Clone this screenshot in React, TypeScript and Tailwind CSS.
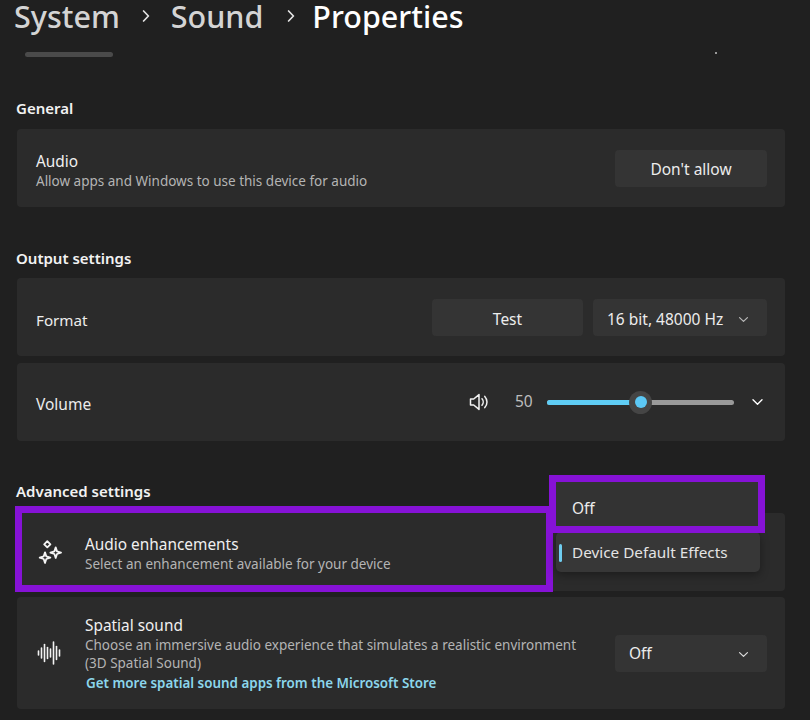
import type { ReactNode } from "react"

const purple = "border-[#8612d6]"

function Chevron({ className }: { className?: string }) {
  return (
    <svg viewBox="0 0 12 8" className={className} fill="none" stroke="currentColor" strokeWidth="1.4" strokeLinecap="round" strokeLinejoin="round">
      <path d="M1.5 1.8 6 6.2l4.5-4.4" />
    </svg>
  )
}

function BreadcrumbChevron({ className }: { className?: string }) {
  return (
    <svg viewBox="0 0 8 12" className={`h-[12px] w-[8px] text-[#e4e4e4] ${className}`} fill="none" stroke="currentColor" strokeWidth="1.7" strokeLinecap="round" strokeLinejoin="round">
      <path d="M1.6 1 6.4 6l-4.8 5" />
    </svg>
  )
}

function SparkleIcon() {
  return (
    <svg viewBox="0 0 24 24" className="h-[24px] w-[24px] text-[#f5f5f5]" fill="none" stroke="currentColor" strokeWidth="1.8" strokeLinejoin="round">
      <path d="M9.3 1.2 12.4 4.3 9.3 7.4 6.2 4.3z" />
      <path d="M17.7 7.4 19 11.4l4 1.3-4 1.3-1.3 4-1.3-4-4-1.3 4-1.3z" />
      <path d="M7 12.4 8.3 16.4l4 1.3-4 1.3L7 23l-1.3-4-4-1.3 4-1.3z" />
    </svg>
  )
}

function WaveIcon() {
  const bars = [
    [1.5, 10, 14],
    [4.5, 7, 17],
    [7.5, 3.5, 20.5],
    [10.5, 6.5, 17.5],
    [13.5, 8, 16],
    [16.5, 1, 23],
    [19.5, 5.5, 18.5],
    [22.5, 9, 15],
  ]
  return (
    <svg viewBox="0 0 25 24" className="h-[24px] w-[25px] text-[#f2f2f2]" stroke="currentColor" strokeWidth="1.6" strokeLinecap="round">
      {bars.map(([x, a, b]) => (
        <line key={x} x1={x} x2={x} y1={a} y2={b} />
      ))}
    </svg>
  )
}

function SpeakerIcon() {
  return (
    <svg viewBox="0 0 20 20" className="h-[20px] w-[20px] text-[#f2f2f2]" fill="none" stroke="currentColor" strokeWidth="1.5" strokeLinecap="round" strokeLinejoin="round">
      <path d="M1.5 7h3.2L10 2.6v14.8L4.7 13H1.5z" />
      <path d="M13 6.8c1.6 1.8 1.6 4.6 0 6.4" />
      <path d="M15.8 4.4c2.9 3.2 2.9 8 0 11.2" />
    </svg>
  )
}

function Card({ children, className = "" }: { children: ReactNode; className?: string }) {
  return <div className={`flex items-center rounded-[4px] bg-[#2b2b2b] pr-[18px] ${className}`}>{children}</div>
}

function Button({ children, className = "" }: { children: ReactNode; className?: string }) {
  return (
    <div className={`flex h-[37px] items-center rounded-[4px] bg-[#343434] text-[15.5px] text-[#ececec] ${className}`}>
      {children}
    </div>
  )
}

function Heading({ children, className = "" }: { children: ReactNode; className?: string }) {
  return <div className={`text-[15px] leading-[20px] font-semibold text-[#f2f2f2] ${className}`}>{children}</div>
}

function Title({ children }: { children: ReactNode }) {
  return <span className="text-[15.4px] leading-[20px] text-[#f0f0f0]">{children}</span>
}

function Sub({ children }: { children: ReactNode }) {
  return <span className="text-[13.5px] leading-[18px] text-[#b4b4b4]">{children}</span>
}

export default function App() {
  return (
    <div className="relative h-[720px] w-[810px] overflow-hidden bg-[#202020] font-['Noto_Sans','Open_Sans',sans-serif]">
      <div className="flex h-[32px] items-center pl-[14px] text-[30.5px] leading-[32px] font-medium text-[#d4d4d4]">
        <span>System</span>
        <BreadcrumbChevron className="mr-[21px] ml-[22px]" />
        <span>Sound</span>
        <BreadcrumbChevron className="mr-[17px] ml-[24px]" />
        <span className="text-white">Properties</span>
      </div>
      <div className="mt-[20px] ml-[25px] h-[5px] w-[88px] rounded-full bg-[#4a4a4a]" />

      <div className="flex flex-col px-[17px] pr-[25px]">
        <Heading className="mt-[41px] -ml-[1px]">General</Heading>
        <Card className="mt-[11px] h-[78px] justify-between pl-[19px]">
          <div className="flex flex-col pt-[6px]">
            <Title>Audio</Title>
            <div className="flex">
              <Sub>Allow apps and Windows to use this device for audio</Sub>
            </div>
          </div>
          <Button className="w-[152px] justify-center pt-[4px]">Don't allow</Button>
        </Card>

        <Heading className="mt-[41px] -ml-[1px]">Output settings</Heading>
        <Card className="mt-[10px] h-[78px] justify-between pl-[19px]">
          <span className="pt-[7px] text-[15.2px] text-[#ececec]">Format</span>
          <div className="flex gap-[10px]">
            <Button className="w-[151px] justify-center pt-[5px]">Test</Button>
            <Button className="w-[174px] justify-between pt-[5px] pr-[18px] pl-[14px]">
              <span>16 bit, 48000 Hz</span>
              <Chevron className="h-[7px] w-[11px] text-[#b8b8b8]" />
            </Button>
          </div>
        </Card>
        <Card className="mt-[7px] h-[78px] justify-between pl-[19px]">
          <span className="pt-[5px] text-[15.5px] text-[#ececec]">Volume</span>
          <div className="flex items-center">
            <SpeakerIcon />
            <span className="ml-[26px] w-[19px] text-[15.5px] text-[#bdbdbd]">50</span>
            <div className="relative ml-[13px] flex h-[5px] w-[187px] rounded-full bg-[#9a9a9a]">
              <div className="h-full w-[94px] rounded-full bg-[#5fcdf5]" />
              <div className="absolute top-[-9px] left-[82px] flex h-[23px] w-[23px] items-center justify-center rounded-full bg-[#454545]">
                <div className="h-[12px] w-[12px] rounded-full bg-[#5cc8f5]" />
              </div>
            </div>
            <Chevron className="mr-[3px] ml-[17px] h-[8px] w-[13px] text-white" />
          </div>
        </Card>

        <Heading className="mt-[40px] -ml-[1px]">Advanced settings</Heading>
        <Card className="mt-[12px] h-[78px] gap-[23px] pl-[21px]">
          <SparkleIcon />
          <div className="flex flex-col pt-[4px]">
            <Title>Audio enhancements</Title>
            <div className="flex">
              <Sub>Select an enhancement available for your device</Sub>
            </div>
          </div>
        </Card>
        <Card className="mt-[6px] h-[112px] justify-between pl-[20px]">
          <div className="flex items-center gap-[23px]">
            <WaveIcon />
            <div className="flex flex-col pt-[2px]">
              <Title>Spatial sound</Title>
              <div className="flex flex-col">
                <Sub>Choose an immersive audio experience that simulates a realistic environment</Sub>
                <Sub>(3D Spatial Sound)</Sub>
              </div>
              <span className="mt-[2px] ml-[1px] text-[13.4px] leading-[18px] font-semibold text-[#8cd6ec]">
                Get more spatial sound apps from the Microsoft Store
              </span>
            </div>
          </div>
          <Button className="w-[152px] justify-between pt-[2px] pr-[18px] pl-[14px]">
            <span>Off</span>
            <Chevron className="h-[7px] w-[11px] text-[#dcdcdc]" />
          </Button>
        </Card>
      </div>

      <div className={`absolute top-[506px] left-[15px] h-[86px] w-[538px] border-[7px] ${purple}`} />
      <div className="absolute top-[532px] left-[556px] flex h-[40px] w-[204px] items-center rounded-[5px] bg-[#373737] pl-[16px] text-[15.3px] text-[#e4e4e4] shadow-[0_3px_8px_rgba(0,0,0,0.35)]">
        <div className="absolute top-[12px] left-[3px] h-[18px] w-[3px] rounded-full bg-[#6fcdf0]" />
        Device Default Effects
      </div>
      <div className={`absolute top-[475px] left-[549px] flex h-[58px] w-[216px] items-center border-[7px] bg-[#333333] pt-[10px] pl-[16px] text-[15.5px] text-[#ececec] ${purple}`}>
        Off
      </div>
      <div className="absolute top-[52px] left-[715px] h-[2px] w-[2px] bg-[#999999]" />
    </div>
  )
}
